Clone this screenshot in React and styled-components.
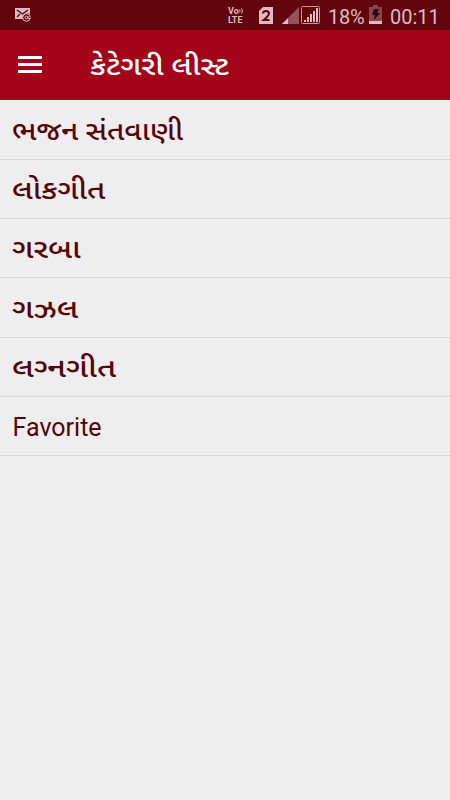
import React from 'react';
import styled, { createGlobalStyle } from 'styled-components';

const GlobalStyle = createGlobalStyle`
  * {
    box-sizing: border-box;
  }

  body {
    margin: 0;
    background: #eeeeee;
    font-family: Roboto, 'Noto Sans Gujarati', 'Noto Sans', sans-serif;
  }
`;

const Screen = styled.div`
  width: 450px;
  height: 800px;
  overflow: hidden;
  background: #eeeeee;
`;

const StatusBar = styled.div`
  display: flex;
  align-items: center;
  height: 30px;
  padding: 0 11px 0 14px;
  background: #62040c;
  color: #dcbcc0;
`;

const MailIcon = styled.svg`
  margin-right: auto;
`;

const StatusIcon = styled.svg`
  flex: none;
  margin-right: ${({ $gap }) => $gap}px;
`;

const StatusText = styled.span`
  width: ${({ $width }) => $width}px;
  margin-right: ${({ $gap }) => $gap || 0}px;
  padding-top: 3px;
  font-size: 20px;
  line-height: 28px;
  letter-spacing: ${({ $tight }) => ($tight ? '-0.3px' : '0')};
  white-space: nowrap;
`;

const VolteText = styled.div`
  width: 16px;
  margin: 1px 15px 0 0;
  font-size: 9px;
  font-weight: 700;
  line-height: 9px;
  white-space: nowrap;
`;

const VolteMark = styled.div`
  display: flex;
  align-items: center;
  height: 9px;
`;

const Toolbar = styled.header`
  display: flex;
  align-items: center;
  height: 70px;
  padding: 0 18px;
  background: #a30419;
`;

const MenuButton = styled.button`
  display: flex;
  flex-direction: column;
  gap: 4px;
  width: 24px;
  margin: 0 48px 1px 0;
  padding: 0;
  border: 0;
  background: none;
`;

const MenuLine = styled.span`
  width: 24px;
  height: 3px;
  background: #ffffff;
`;

const Title = styled.h1`
  margin: 0;
  padding-top: 2px;
  color: #ffffff;
  font-size: 26px;
  font-weight: 500;
  line-height: 36px;
  white-space: nowrap;
  transform: scaleX(1.19);
  transform-origin: left;
`;

const List = styled.ul`
  margin: 0;
  padding: 0.6px 0 0;
  list-style: none;
`;

const Item = styled.li`
  display: flex;
  align-items: center;
  height: 59.3px;
  padding: 3px 12px 0;
  border-bottom: 1px solid #d9d9d9;
  color: #560307;
  line-height: 36px;
  white-space: nowrap;
`;

const Label = styled.span`
  display: block;
  padding-left: ${({ $stretch }) => ($stretch ? 0 : 0.6)}px;
  padding-bottom: ${({ $stretch }) => ($stretch ? 1 : 0)}px;
  font-size: ${({ $stretch }) => ($stretch ? 26 : 25)}px;
  font-weight: ${({ $stretch }) => ($stretch ? 500 : 400)};
  transform: scaleX(${({ $stretch }) => $stretch || 1});
  transform-origin: left;
`;

const categories = [
  { name: 'ભજન સંતવાણી', stretch: 1.14 },
  { name: 'લોકગીત', stretch: 1.2 },
  { name: 'ગરબા', stretch: 1.23 },
  { name: 'ગઝલ', stretch: 1.24 },
  // the joiner keeps the half form of the conjunct
  { name: 'લગ્\u200dનગીત', stretch: 1.26 },
  { name: 'Favorite' },
];

const Status = () => (
  <StatusBar>
    <MailIcon width="18" height="16" viewBox="0 0 18 16">
      <path d="M1 1h15v6a5 5 0 0 0-7 5H1z" fill="#dcbcc0" />
      <path d="M3 3l5.5 4L14 3M3 10l3-3" fill="none" stroke="#62040c" strokeWidth="1.4" />
      <circle cx="12.5" cy="10.5" r="3.8" fill="#62040c" stroke="#dcbcc0" strokeWidth="1" />
      <circle cx="12.3" cy="10.5" r="1.4" fill="none" stroke="#dcbcc0" />
      <path d="M14 9v2.5h2" fill="none" stroke="#dcbcc0" />
    </MailIcon>
    <VolteText>
      <VolteMark>
        Vo
        <svg width="6" height="8" viewBox="0 0 6 8">
          <path d="M.7 2.3q1.2 1.7 0 3.4M2.9 1q2.4 3 0 6" fill="none" stroke="#dcbcc0" strokeWidth="1.1" />
        </svg>
      </VolteMark>
      LTE
    </VolteText>
    <StatusIcon $gap={9} width="14" height="18" viewBox="0 0 14 18">
      <path d="M4 1h10v17H0V5z" fill="#dcbcc0" />
      <path d="M4 7.6Q4 5 7 5t3 2.5Q10 9.5 4.8 14H10.5" fill="none" stroke="#62040c" strokeWidth="2" />
    </StatusIcon>
    <StatusIcon $gap={2} width="17" height="17" viewBox="0 0 17 17">
      <path d="M17 0v17H0z" fill="#965056" />
      <path d="M6 11v6H0z" fill="#dcbcc0" />
    </StatusIcon>
    <StatusIcon $gap={8} width="19" height="18" viewBox="0 0 19 18">
      <rect x=".5" y=".5" width="18" height="17" rx="1" fill="none" stroke="#c49a9f" />
      <path d="M3 14h2v2H3zM6 11h2v5H6zM9 8h2v8H9zM12 5h2v11h-2zM15 2h2v14h-2z" fill="#dcbcc0" />
    </StatusIcon>
    <StatusText $width={37} $gap={4} $tight>18%</StatusText>
    <StatusIcon $gap={8} width="13" height="20" viewBox="0 0 13 20">
      <path d="M4 0h5v2h4v17H0V2h4z" fill="#8a454b" />
      <path d="M0 16h13v3H0z" fill="#dcbcc0" />
      <path d="M5 4h5L8 8h3l-6 7 1-5H3z" fill="#2b0206" />
    </StatusIcon>
    <StatusText $width={49}>00:11</StatusText>
  </StatusBar>
);

const App = () => (
  <Screen>
    <GlobalStyle />
    <Status />
    <Toolbar>
      <MenuButton aria-label="Menu">
        <MenuLine />
        <MenuLine />
        <MenuLine />
      </MenuButton>
      <Title>કેટેગરી લીસ્ટ</Title>
    </Toolbar>
    <List>
      {categories.map(({ name, stretch }) => (
        <Item key={name}>
          <Label $stretch={stretch}>{name}</Label>
        </Item>
      ))}
    </List>
  </Screen>
);

export default App;
